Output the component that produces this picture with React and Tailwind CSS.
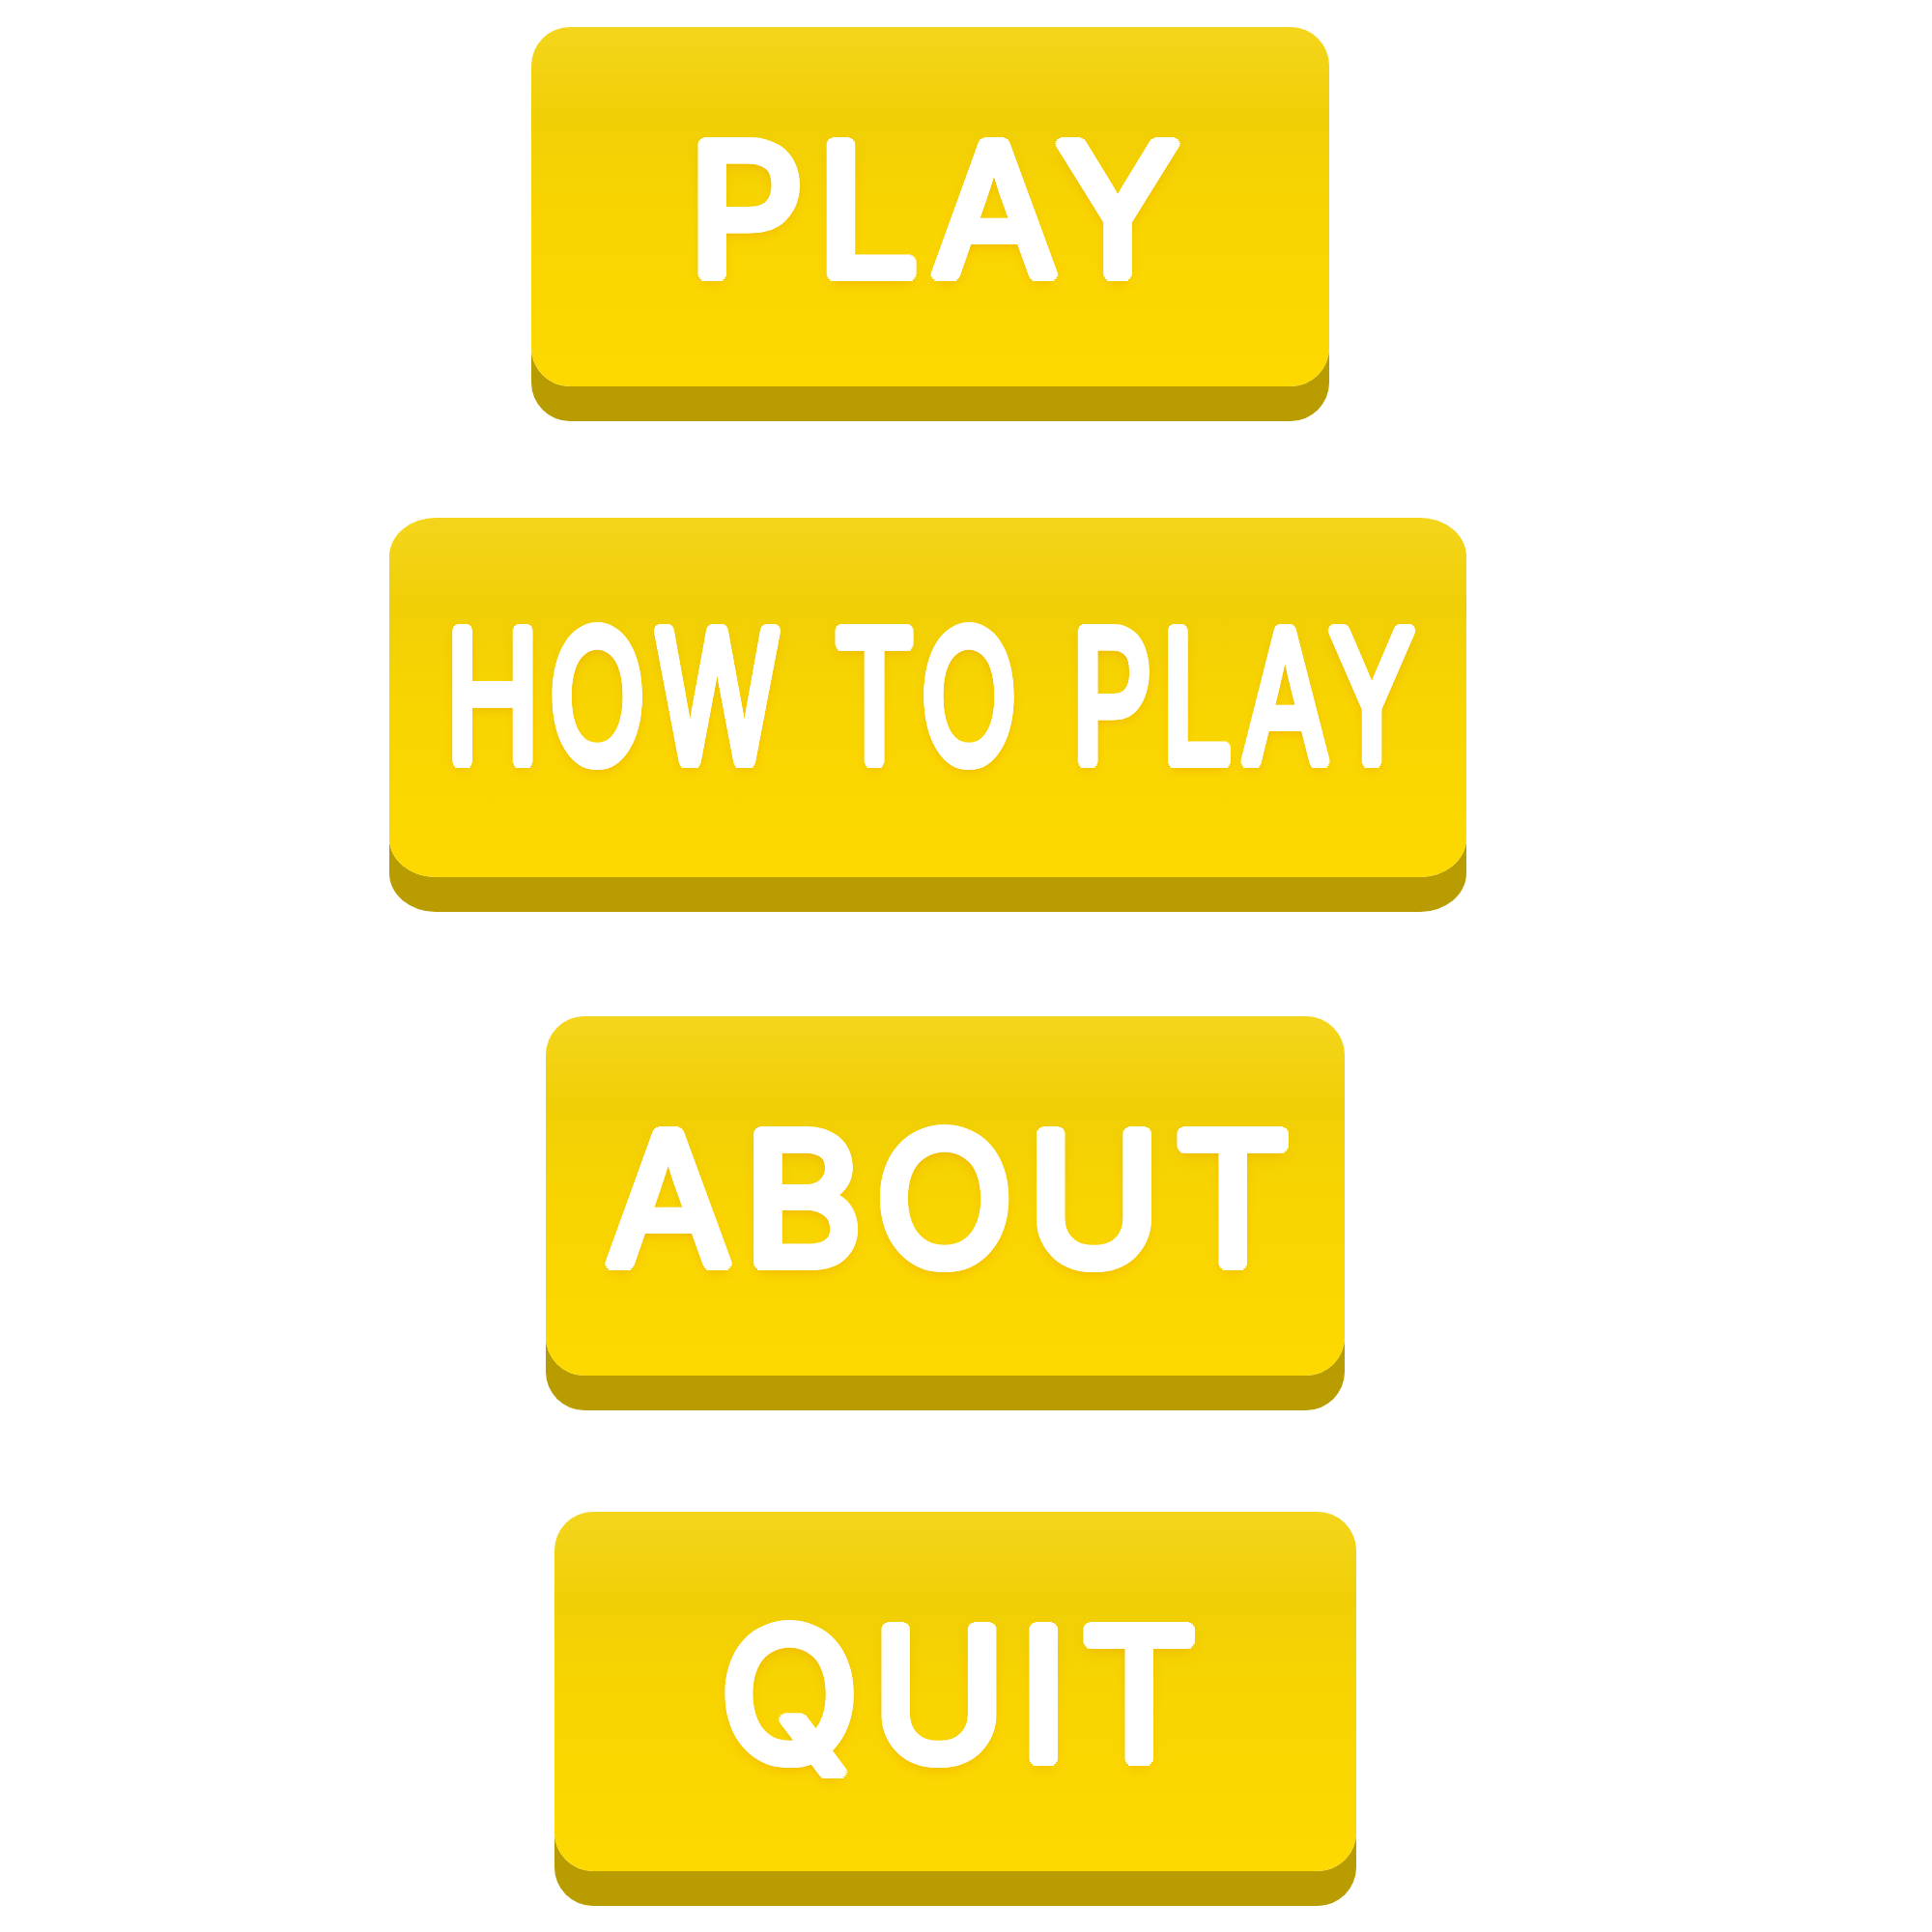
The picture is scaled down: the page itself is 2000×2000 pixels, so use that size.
import React from 'react';

const buttons = [
  { label: 'PLAY', box: 'ml-[550px] mt-[28px] w-[826px] rounded-[40px]', text: '' },
  { label: 'HOW TO PLAY', box: 'ml-[403px] mt-[136px] w-[1115px] rounded-[48px/40px]', text: 'scale-x-[0.70] -mt-[8px]' },
  { label: 'ABOUT', box: 'ml-[565px] mt-[144px] w-[827px] rounded-[40px]', text: '' },
  { label: 'QUIT', box: 'ml-[574px] mt-[141px] w-[830px] rounded-[40px]', text: '' },
];

// a ring of white copies fattens the thin glyphs and rounds their ends, last entry is the orange glow
const glyphShadow =
  '[text-shadow:6px_0_0_#fff,5.5px_2.3px_0_#fff,4.2px_4.2px_0_#fff,2.3px_5.5px_0_#fff,0_6px_0_#fff,-2.3px_5.5px_0_#fff,-4.2px_4.2px_0_#fff,-5.5px_2.3px_0_#fff,-6px_0_0_#fff,-5.5px_-2.3px_0_#fff,-4.2px_-4.2px_0_#fff,-2.3px_-5.5px_0_#fff,0_-6px_0_#fff,2.3px_-5.5px_0_#fff,4.2px_-4.2px_0_#fff,5.5px_-2.3px_0_#fff,0_6px_14px_rgba(235,160,0,0.75)]';

const MenuButton = ({ label, box, text }) => (
  <button
    type="button"
    className={`${box} h-[372px] shrink-0 flex items-center justify-center pt-[6px] bg-[linear-gradient(180deg,#f4d51c_0%,#f0cf06_25%,#f9d500_55%,#fdd900_100%)] shadow-[0_36px_0_#b89c00]`}
  >
    <span
      className={`inline-block whitespace-nowrap pl-[20px] text-white font-normal text-[188px] tracking-[13px] leading-none font-['Inter','Liberation_Sans',sans-serif] ${glyphShadow} ${text}`}
    >
      {label}
    </span>
  </button>
);

export default function App() {
  return (
    <div className="w-[2000px] min-h-[2000px] bg-white flex flex-col items-start">
      {buttons.map((b) => (
        <MenuButton key={b.label} {...b} />
      ))}
    </div>
  );
}
